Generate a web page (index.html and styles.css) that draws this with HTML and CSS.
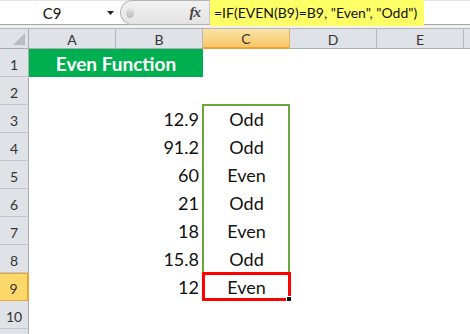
FILE: index.html
```html
<!DOCTYPE html>
<html lang="en">
<head>
    <meta charset="UTF-8">
    <title>Even Function</title>
    <link rel="stylesheet" href="styles.css">
</head>
<body>
    <!-- Formula bar -->
    <div class="formula-bar">
        <div class="name-box">
            <span class="cell-ref">C9</span>
            <svg class="dropdown" width="7" height="4" viewBox="0 0 7 4"><path d="M0 0H7L3.5 4Z" fill="#222"/></svg>
        </div>
        <div class="fb-tools">
            <span class="knob"></span>
            <span class="fx">f<i>x</i></span>
        </div>
        <div class="fb-input">
            <span class="formula">=IF(EVEN(B9)=B9, "Even", "Odd")</span>
        </div>
    </div>
    <div class="fb-gap"></div>

    <!-- Sheet -->
    <div class="sheet">
        <div class="corner"><span class="corner-tri"></span></div>
        <div class="col-head">A</div>
        <div class="col-head">B</div>
        <div class="col-head selected">C</div>
        <div class="col-head">D</div>
        <div class="col-head">E</div>
        <div class="col-head last"></div>

        <div class="row-head">1</div>
        <div class="cell title">Even Function</div>
        <div class="cell"></div><div class="cell"></div><div class="cell"></div><div class="cell"></div>

        <div class="row-head">2</div>
        <div class="cell"></div><div class="cell"></div><div class="cell"></div><div class="cell"></div><div class="cell"></div><div class="cell"></div>

        <div class="row-head">3</div>
        <div class="cell"></div><div class="cell num">12.9</div><div class="cell txt">Odd</div><div class="cell"></div><div class="cell"></div><div class="cell"></div>

        <div class="row-head">4</div>
        <div class="cell"></div><div class="cell num">91.2</div><div class="cell txt">Odd</div><div class="cell"></div><div class="cell"></div><div class="cell"></div>

        <div class="row-head">5</div>
        <div class="cell"></div><div class="cell num">60</div><div class="cell txt">Even</div><div class="cell"></div><div class="cell"></div><div class="cell"></div>

        <div class="row-head">6</div>
        <div class="cell"></div><div class="cell num">21</div><div class="cell txt">Odd</div><div class="cell"></div><div class="cell"></div><div class="cell"></div>

        <div class="row-head">7</div>
        <div class="cell"></div><div class="cell num">18</div><div class="cell txt">Even</div><div class="cell"></div><div class="cell"></div><div class="cell"></div>

        <div class="row-head">8</div>
        <div class="cell"></div><div class="cell num">15.8</div><div class="cell txt">Odd</div><div class="cell"></div><div class="cell"></div><div class="cell"></div>

        <div class="row-head selected">9</div>
        <div class="cell"></div><div class="cell num">12</div><div class="cell txt">Even</div><div class="cell"></div><div class="cell"></div><div class="cell"></div>

        <div class="row-head">10</div>
        <div class="cell"></div><div class="cell"></div><div class="cell"></div><div class="cell"></div><div class="cell"></div><div class="cell"></div>

        <div class="row-head"></div>

        <!-- selection overlays -->
        <div class="range-box"></div>
        <div class="active-box"><span class="fill-handle"></span></div>
    </div>
</body>
</html>
```
FILE: styles.css
```css
body {
    margin: 0;
    width: 470px;
    height: 334px;
    overflow: hidden;
    background: #fff;
    font-family: Lato, 'Liberation Sans', sans-serif;
    color: #111;
}

/* ---------- formula bar ---------- */
.formula-bar {
    display: flex;
    height: 25px;
    background: #fff;
    border-top: 1px solid #e4e4e4;
    box-sizing: border-box;
    border-bottom: 1px solid #a6a6a6;
}

.name-box {
    width: 120px;
    display: flex;
    align-items: center;
    font-size: 15px;
}

.cell-ref {
    width: 104px;
    text-align: center;
}

.dropdown {
    margin-left: 3px;
}

.fb-tools {
    width: 89px;
    display: flex;
    align-items: center;
    background: linear-gradient(#f2f2f2, #e3e3e3);
    border: 1px solid #b4b4b4;
    border-right: none;
    border-radius: 13px 0 0 13px;
    box-sizing: border-box;
    margin-top: -1px;
    height: 25px;
}

.knob {
    width: 8px;
    height: 10px;
    margin-left: 5px;
    border-radius: 50%;
    background: linear-gradient(#e6e6e6, #b9b9b9);
}

.fx {
    margin-left: auto;
    margin-right: 9px;
    font-family: 'Liberation Serif', serif;
    font-style: italic;
    font-size: 15px;
    color: #444;
    font-weight: bold;
    letter-spacing: -1px;
}

.fb-input {
    flex: 1;
    display: flex;
    border-left: 1px solid #c8c8c8;
    margin-top: -1px;
}

.formula {
    background: #ffff66;
    padding: 0 7px 0 4px;
    font-size: 14px;
    line-height: 26px;
    height: 26px;
}

.fb-gap {
    height: 3px;
    background: #f0f0f0;
    border-bottom: 1px solid #b6b6b6;
}

/* ---------- sheet grid ---------- */
.sheet {
    display: grid;
    position: relative;
    grid-template-columns: 29px repeat(5, 87px) 1fr;
    grid-template-rows: 20px repeat(11, 28px);
}

.corner,
.col-head,
.row-head {
    background: #dfe2e6;
    color: #333;
    font-size: 14px;
    display: flex;
    align-items: center;
    justify-content: center;
    box-sizing: border-box;
}

.corner {
    border-right: 1px solid #a9acb0;
    border-bottom: 1px solid #a9acb0;
    position: relative;
}

.corner-tri {
    position: absolute;
    right: 3px;
    bottom: 3px;
    width: 0;
    height: 0;
    border-left: 12px solid transparent;
    border-bottom: 12px solid #b9bcc0;
}

.col-head {
    border-right: 1px solid #b3b6ba;
    border-bottom: 1px solid #a9acb0;
    padding-top: 1px;
}

.col-head.last {
    border-right: none;
}

.row-head {
    grid-column: 1;
    border-right: 1px solid #a9acb0;
    border-bottom: 1px solid #c3c6ca;
    padding-top: 3px;
}

.col-head.selected {
    background: linear-gradient(#fbe3a8, #f6c765);
    border-bottom: 2px solid #f0a23a;
    border-right-color: #e0b060;
}

.row-head.selected {
    background: #fcd86a;
    border: 1px solid #e2a53a;
    border-left: none;
    border-right: 2px solid #e2a53a;
}

.cell {
    font-size: 18px;
    display: flex;
    align-items: center;
    box-sizing: border-box;
}

.cell.title {
    grid-column: span 2;
    background: #00b050;
    color: #fff;
    font-weight: bold;
    font-size: 19px;
    justify-content: center;
    padding-top: 1px;
}

.cell.num {
    justify-content: flex-end;
    padding-right: 4px;
}

.cell.txt {
    justify-content: center;
}

/* ---------- selection overlays ---------- */
.range-box {
    position: absolute;
    grid-column: 4 / 5;
    grid-row: 4 / 10;
    top: -1px;
    left: -1px;
    right: 0;
    bottom: 0;
    border: 2px solid #6aa73a;
    border-bottom: none;
    pointer-events: none;
}

.active-box {
    position: absolute;
    grid-column: 4 / 5;
    grid-row: 10 / 11;
    top: -1px;
    left: -1px;
    right: -1px;
    bottom: 0;
    border: 3px solid #ff0000;
    pointer-events: none;
}

.fill-handle {
    position: absolute;
    right: -4px;
    bottom: -4px;
    width: 4px;
    height: 4px;
    background: #111;
    border: 1px solid #fff;
}
```
